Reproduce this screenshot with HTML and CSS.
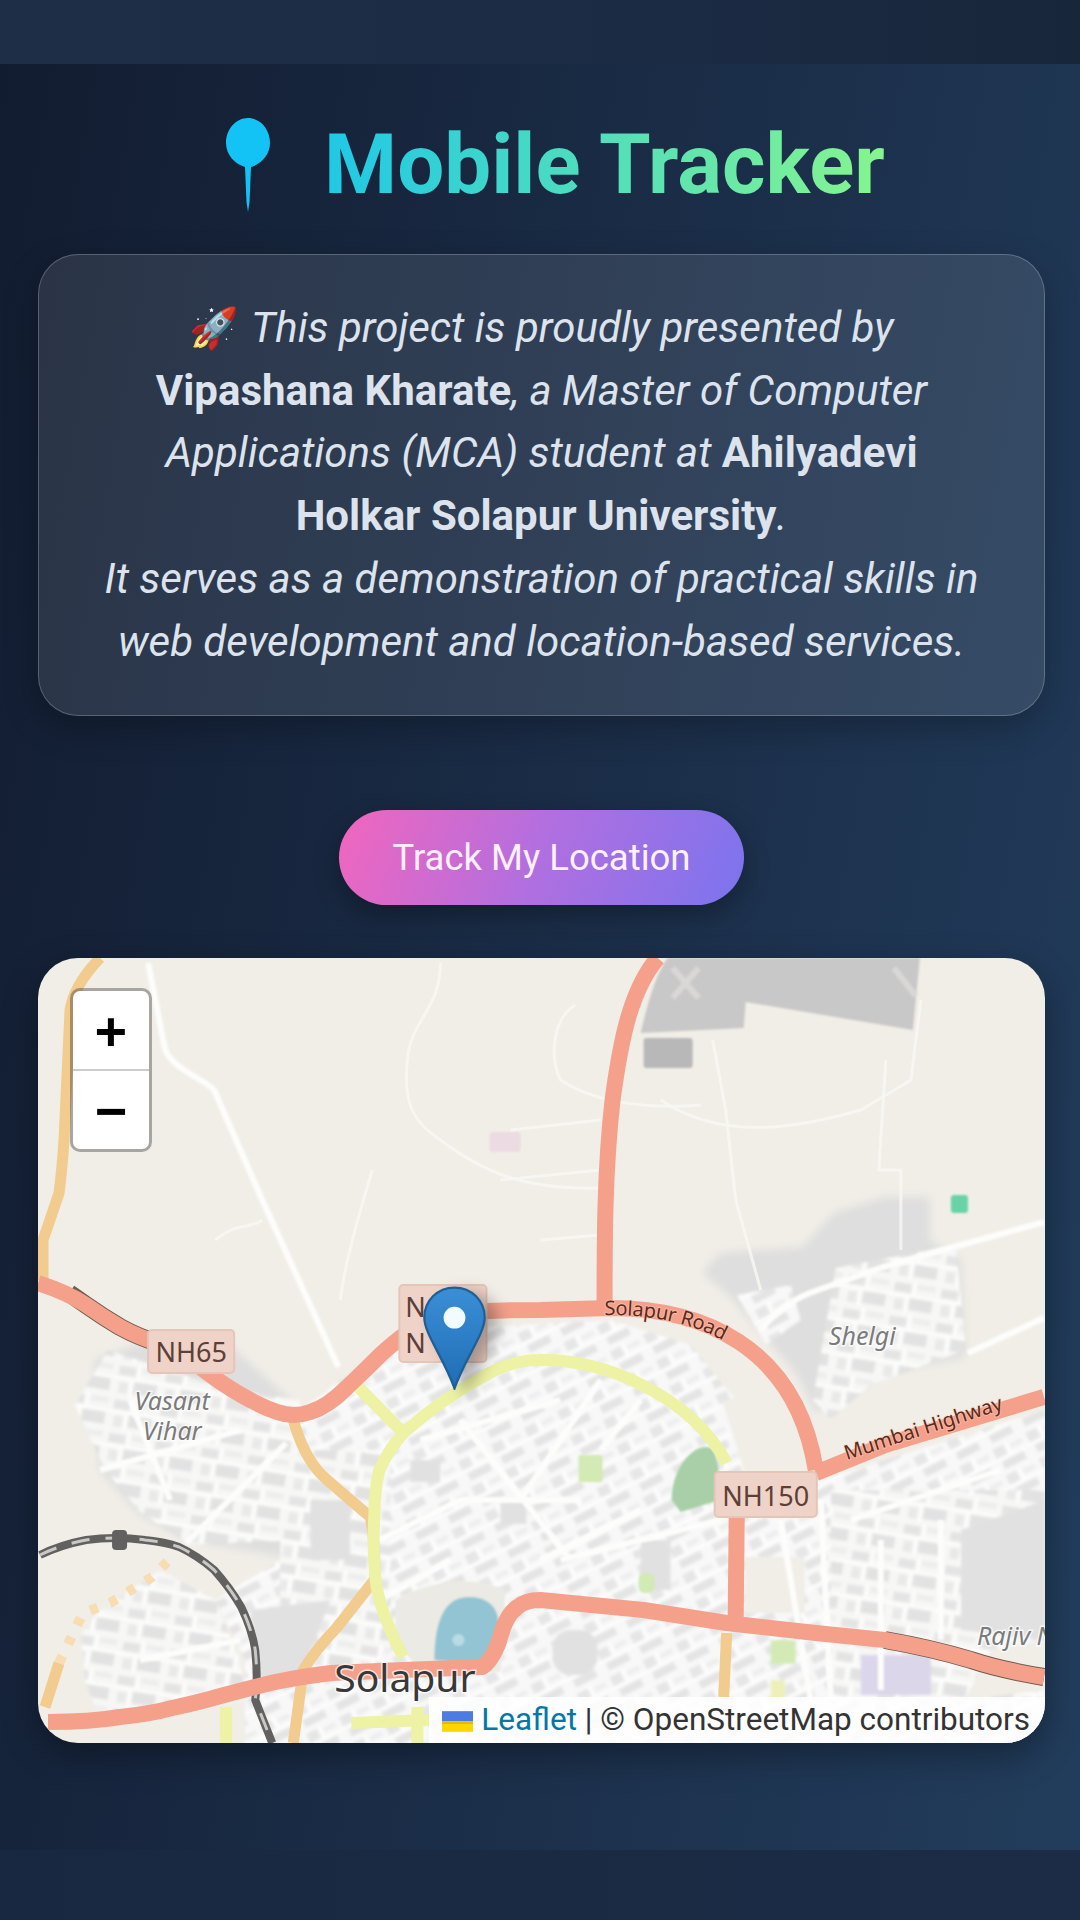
FILE: index.html
```html
<!DOCTYPE html>
<html lang="en">
<head>
<meta charset="utf-8">
<title>Mobile Tracker</title>
<link rel="stylesheet" href="styles.css">
</head>
<body>
<div class="bar-top"></div>
<main class="page">
  <header class="title-row">
    <svg class="title-pin" viewBox="0 0 44 94" aria-hidden="true">
      <path d="M22 0C34 0 44 11 44 25C44 37 35 46 25 49L23.500 84L22 94L20.500 84L19 49C9 46 0 37 0 25C0 11 10 0 22 0Z"/>
    </svg>
    <h1 class="title">Mobile Tracker</h1>
  </header>
  <section class="intro">
    <p class="intro-text"><span class="rocket">🚀</span> This project is proudly presented by <strong>Vipashana Kharate</strong>, a Master of Computer Applications (MCA) student at <strong>Ahilyadevi Holkar Solapur University</strong>.<br>It serves as a demonstration of practical skills in web development and location-based services.</p>
  </section>
  <button class="track-btn" type="button">Track My Location</button>
  <section class="map">
    <svg class="map-svg" viewBox="38 958 1006 785" preserveAspectRatio="none">
      <defs>
        <pattern id="mesh" width="47" height="34" patternUnits="userSpaceOnUse" patternTransform="rotate(9)">
          <rect width="47" height="34" fill="#f7f7f6"/>
          <rect x="3" y="4" width="17" height="9" fill="#e4e4e4"/>
          <rect x="26" y="3" width="18" height="6" fill="#eeeeee"/>
          <rect x="5" y="20" width="9" height="11" fill="#e9e9e9"/>
          <rect x="20" y="18" width="23" height="12" fill="#e2e2e2"/>
          <path d="M0 16H47M23 0V16M17 16V34" stroke="#fff" stroke-width="2"/>
        </pattern>
        <pattern id="mesh2" width="37" height="29" patternUnits="userSpaceOnUse" patternTransform="rotate(-27)">
          <rect width="37" height="29" fill="#f8f8f8"/>
          <rect x="3" y="2" width="12" height="10" fill="#e6e6e6"/>
          <rect x="21" y="4" width="13" height="5" fill="#eeeeee"/>
          <rect x="6" y="17" width="24" height="8" fill="#e4e4e4"/>
          <path d="M0 14H37M18 0V14" stroke="#fff" stroke-width="2"/>
        </pattern>
        <filter id="soft"><feGaussianBlur stdDeviation="1"/></filter>
        <filter id="blur-mesh"><feGaussianBlur stdDeviation="1.8"/></filter>
        <filter id="softer"><feGaussianBlur stdDeviation="4"/></filter>
      </defs>
      <rect class="land" x="38" y="958" width="1006" height="785"/>

      <g filter="url(#softer)">
        <path class="grey-zone" d="M702 1273L719 1253L802 1247L833 1213L884 1197L929 1197L929 1240L960 1260L964 1357L884 1373L815 1413L795 1373L760 1333L733 1300Z"/>
        <path class="grey-zone" d="M95 1360L150 1340L230 1345L290 1400L300 1560L190 1540L140 1515L100 1470Z"/>
      </g>

      <g filter="url(#soft)">
        <path class="mine" d="M667 958L919 958L912 1030L745 1002L743 1028L640 1033C648 1000 655 975 667 958Z"/>
        <rect class="mine-dark" x="643" y="1038" width="49" height="30" rx="3"/>
        <path class="mine-icon" d="M672 968L698 998M698 968L672 998M893 968L915 996"/>
      </g>
      <g filter="url(#blur-mesh)">
        <path class="city-b" d="M1044 1410L820 1480L760 1470L735 1400L690 1345L610 1320L430 1330L340 1380L300 1410L280 1560L215 1600L245 1660L245 1745L1044 1745Z"/>
        <path class="city-a" d="M75 1405L108 1350L230 1390L300 1400L300 1540L190 1545L140 1512L105 1470Z"/>
        <path class="city-a" d="M80 1625L160 1570L215 1600L240 1660L245 1700L100 1722L85 1680Z"/>
        <path class="city-a" d="M835 1268L955 1245L965 1350L870 1385L830 1420L812 1400Z"/>
        <path class="city-b" d="M736 1295L790 1285L800 1320L765 1345Z"/>
        <rect class="city-a" x="280" y="1450" width="110" height="220"/>
        <rect class="city-a" x="830" y="1490" width="214" height="210"/>
        <rect class="city-b" x="540" y="1480" width="90" height="110"/>

        <rect class="land" x="744" y="1557" width="60" height="56"/>
        <path class="land" d="M722 1402L785 1380L806 1465L745 1476Z"/>
        <path class="land" d="M38 1562L86 1548L150 1548L60 1660L38 1690Z"/>
        <path class="land" d="M964 1700L1044 1690L1044 1640L990 1650Z"/>
        <path class="plain-grey" d="M250 1610L330 1600L300 1680L262 1690Z"/>
        <path class="plain-grey" d="M960 1530L1044 1500L1044 1640L960 1630Z"/>
        <rect class="plain-grey" x="552" y="1630" width="45" height="45" rx="18"/>
        <rect class="plain-grey" x="310" y="1500" width="40" height="60"/>
        <rect class="plain-grey" x="640" y="1540" width="30" height="50"/>
        <rect class="plain-grey" x="410" y="1460" width="30" height="22"/>
        <rect class="plain-grey" x="500" y="1500" width="26" height="24"/>
        <rect class="purple" x="860" y="1655" width="70" height="40"/>
        <rect class="lawn" x="770" y="1640" width="25" height="24"/>
        <rect class="pale-yellow" x="770" y="1680" width="14" height="20"/>
      </g>
      <g filter="url(#soft)">
        <rect class="pink" x="489" y="1132" width="31" height="20" rx="3"/>
        <rect class="teal" x="950" y="1195" width="17" height="18" rx="3"/>
        <path class="park" d="M671 1500C671 1470 690 1447 705 1447C716 1447 719 1465 719 1500L680 1512Z"/>
        <rect class="lawn" x="578" y="1455" width="24" height="27" rx="2"/>
        <rect class="lawn" x="638" y="1573" width="16" height="20" rx="6"/>
        <path class="halo" d="M395 1600C430 1580 470 1575 505 1590L500 1672L420 1672L395 1640Z"/>
        <path class="lake" d="M434 1660C434 1630 440 1597 468 1597C490 1597 500 1610 498 1630C496 1650 485 1664 470 1664Z"/>
        <circle class="lake-spot" cx="458" cy="1640" r="6"/>
      </g>

      <g class="faint">
        <path d="M440 963C440 1010 410 1020 407 1060C403 1100 410 1120 440 1140C480 1170 520 1190 600 1188"/>
        <path d="M372 1170C360 1210 345 1260 340 1300"/>
        <path d="M575 1005C550 1020 550 1060 560 1080C590 1100 640 1110 700 1105"/>
        <path d="M712 1040L725 1110L735 1200L760 1290"/>
        <path d="M885 1060L878 1170L900 1170L900 1250"/>
        <path d="M660 1100C720 1140 790 1130 860 1110L910 1080L920 1000"/>
        <path d="M540 1240L600 1235M510 1130L600 1120M500 1180L600 1170"/>
        <path d="M215 1240C240 1220 250 1230 262 1220"/>
      </g>
      <g class="roads-white" filter="url(#soft)">
        <path d="M148 963L165 1050Q170 1062 190 1074Q208 1084 214 1090L262 1200L303 1290L338 1367"/>
        <path d="M286 1443L186 1543"/>
        <path d="M879 1268L953 1247L1043 1222"/>
        <path d="M760 1330Q780 1305 809 1293L879 1268"/>
        <path d="M967 1353L1043 1318"/>
        <path d="M379 1540L460 1500L580 1500M460 1420L570 1560M640 1510L540 1560M780 1520L810 1700M820 1500L830 1700"/>
        <path d="M420 1440L560 1400M600 1380L520 1500M380 1600L450 1560M560 1560L720 1520M640 1400L600 1450"/>
        <path d="M850 1520L1000 1470M880 1540V1690M940 1520V1640M100 1470L240 1430M130 1400L170 1500M140 1660L240 1640"/>
      </g>

      <g class="road-orange">
        <path d="M100 958Q74 985 70 1010L64 1140Q62 1170 59 1193Q50 1220 43 1240L43 1280"/>
        <path d="M293 1420Q305 1462 327 1480Q350 1500 370 1517Q376 1550 374 1580L337 1627Q315 1650 303 1670L293 1743"/>
        <path d="M59 1663L45 1707"/>
        <path d="M726 1633L723 1697"/>
      </g>
      <path class="road-dotted" d="M59 1663L83 1613L110 1603L152 1577L172 1557"/>
      <g class="road-yellow">
        <path d="M403 1657Q378 1610 375 1577Q372 1545 374 1517Q374 1490 379 1470Q388 1450 403 1433Q440 1400 482 1377Q510 1360 540 1360C600 1358 690 1395 726 1463"/>
        <path d="M358 1387L403 1433"/>
        <path d="M351 1723L430 1720M417 1707V1743M226 1707V1743"/>
      </g>
      <path class="rail" d="M40 1555Q60 1545 86 1540Q115 1536 145 1540Q165 1542 179 1547Q198 1556 214 1570Q230 1588 241 1607Q252 1630 255 1650Q258 1680 255 1700L272 1743"/>
      <path class="rail-dash" d="M40 1555Q60 1545 86 1540Q115 1536 145 1540Q165 1542 179 1547Q198 1556 214 1570Q230 1588 241 1607Q252 1630 255 1650Q258 1680 255 1700L272 1743"/>
      <rect class="rail-stop" x="112" y="1530" width="15" height="20" rx="4"/>

      <path class="road-casing" d="M884 1640Q930 1648 970 1660Q1000 1670 1043 1677"/>
      <path class="road-casing" d="M69 1293Q86 1305 86 1305Q103 1317 120 1327Q138 1337 158 1343"/>
      <g class="road-main">
        <path id="ring" d="M38 1283Q69 1293 86 1305Q103 1317 120 1327Q138 1337 158 1343Q179 1350 200 1367Q220 1383 241 1395Q262 1407 277 1412Q293 1418 310 1412Q327 1407 346 1388Q365 1370 382 1353Q400 1337 415 1327Q430 1317 460 1313Q489 1310 540 1310L609 1308C700 1308 795 1345 815 1470"/>
        <path d="M815 1473L884 1445L1043 1397"/>
        <path d="M657 958C630 990 620 1040 612 1100C604 1170 604 1240 604 1305"/>
        <path d="M48 1722Q90 1722 120 1717Q150 1714 172 1708Q200 1702 224 1695Q250 1688 275 1682Q305 1676 331 1673L403 1670L482 1667Q492 1660 499 1640Q505 1615 517 1607Q525 1600 540 1600L643 1610L726 1623L815 1633L884 1640Q930 1648 970 1660Q1000 1670 1043 1677"/>
        <path d="M736 1517L735 1617"/>
      </g>

      <g class="shield">
        <rect x="148" y="1330" width="86" height="43" rx="4"/>
        <rect x="399" y="1285" width="87" height="77" rx="4"/>
        <rect x="714" y="1472" width="102" height="45" rx="4"/>
      </g>
      <text class="shield-text" x="191" y="1362" text-anchor="middle">NH65</text>
      <text class="shield-text" x="405" y="1317">N</text>
      <text class="shield-text" x="405" y="1353">N</text>
      <text class="shield-text" x="765" y="1506" text-anchor="middle">NH150</text>
      <text class="road-label" dy="7"><textPath href="#ring" startOffset="634">Solapur Road</textPath></text>
      <text class="road-label" transform="translate(846 1460) rotate(-18)">Mumbai Highway</text>
      <text class="place-italic" x="172" y="1410" text-anchor="middle">Vasant</text>
      <text class="place-italic" x="172" y="1440" text-anchor="middle">Vihar</text>
      <text class="place-italic" x="828" y="1345">Shelgi</text>
      <text class="place-italic" x="976" y="1645">Rajiv Nagar</text>
      <text class="place-city" x="334" y="1692">Solapur</text>
    </svg>

    <div class="zoom">
      <span class="zoom-btn">+</span>
      <span class="zoom-btn">−</span>
    </div>

    <svg class="marker" viewBox="0 0 25 41" aria-hidden="true">
      <defs>
        <linearGradient id="pin" x1="0" y1="0" x2="0" y2="1">
          <stop offset="0" stop-color="#3a8fd6"/>
          <stop offset="1" stop-color="#1f6db5"/>
        </linearGradient>
      </defs>
      <path d="M12.5 .6C5.700 .6 .6 5.900 .6 12.400C.6 19 8.400 28.500 12.500 40.400C16.600 28.500 24.400 19 24.400 12.400C24.400 5.900 19.300 .6 12.500 .6Z" fill="url(#pin)" stroke="#1f5f95" stroke-width=".9"/>
      <circle cx="12.5" cy="12.5" r="4.3" fill="#f2fbff"/>
    </svg>

    <div class="attribution"><svg class="flag" viewBox="0 0 12 8" aria-hidden="true"><rect width="12" height="4" fill="#4c7be1"/><rect y="4" width="12" height="4" fill="#ffd500"/><rect y="4" width="12" height="1" fill="#e0bc00"/></svg> <a class="attr-link">Leaflet</a> | © OpenStreetMap contributors</div>
  </section>
</main>
<div class="bar-bottom"></div>
</body>
</html>
```
FILE: styles.css
```css
* { box-sizing: border-box; }
html, body { margin: 0; padding: 0; }
body {
  width: 1080px;
  height: 1920px;
  overflow: hidden;
  display: flex;
  flex-direction: column;
  font-family: Roboto, "Noto Sans", sans-serif;
  background: #1b2a42;
}
.bar-top {
  height: 64px;
  flex: none;
  background: linear-gradient(90deg, #1f2e47, #1b2b44 60%, #18263a);
}
.bar-bottom {
  height: 70px;
  flex: none;
  background: linear-gradient(90deg, #182840, #1d2c46);
}
.page {
  flex: 1;
  min-height: 0;
  padding: 54px 35px 0 38px;
  display: flex;
  flex-direction: column;
  align-items: center;
  background: linear-gradient(100deg, #121c30 0%, #1b2e49 55%, #223d5c 100%);
}
.title-row {
  display: flex;
  align-items: center;
  justify-content: center;
  gap: 54px;
  height: 94px;
  width: 100%;
  padding-left: 28px;
}
.title-pin { width: 44px; height: 94px; flex: none; fill: #14c3f5; }
.title {
  margin: 0;
  font-size: 83.5px;
  font-weight: 700;
  line-height: 94px;
  background: linear-gradient(90deg, #1fc8e6, #86f58e);
  -webkit-background-clip: text;
  background-clip: text;
  color: transparent;
}
.intro {
  margin-top: 42px;
  width: 1007px;
  height: 462px;
  padding: 42px 61px 0;
  background: rgba(255, 255, 255, 0.1);
  border: 1.5px solid rgba(255, 255, 255, 0.22);
  border-radius: 40px;
  box-shadow: 0 12px 34px rgba(0, 0, 0, 0.25);
}
.intro-text {
  margin: 0;
  color: #dde3ec;
  font-size: 42px;
  line-height: 62.7px;
  font-style: italic;
  text-align: center;
}
.intro-text strong { font-style: normal; font-weight: 700; }
.rocket { font-size: 40px; line-height: 0; font-style: normal; margin-right: 2px; }
.track-btn {
  margin-top: 94px;
  width: 405px;
  height: 95px;
  border: 0;
  border-radius: 48px;
  font-family: inherit;
  font-size: 36.5px;
  color: #fff0fb;
  background: linear-gradient(112deg, #f266bd 0%, #b06fe0 50%, #7b74ee 100%);
  box-shadow: 0 10px 26px rgba(0, 0, 0, 0.3);
}
.map {
  position: relative;
  margin-top: 53px;
  width: 1007px;
  height: 785px;
  flex: none;
  overflow: hidden;
  border-radius: 40px;
  box-shadow: 0 12px 34px rgba(0, 0, 0, 0.35);
}
.map-svg { display: block; width: 100%; height: 100%; }

.land { fill: #f1eee7; }
.grey-zone { fill: #dedede; }
.mine { fill: #c9c8c8; }
.mine-dark { fill: #b9b8b9; }
.mine-icon { stroke: #d9d8d6; stroke-width: 6; fill: none; }
.city-a { fill: url(#mesh); }
.city-b { fill: url(#mesh2); }
.plain-grey { fill: #e1e1e1; }
.purple { fill: #dcd6ea; }
.pink { fill: #ecdbe2; }
.teal { fill: #6ad2a8; }
.park { fill: #a8cfa8; }
.lawn { fill: #d3eab4; }
.pale-yellow { fill: #eef0b8; }
.halo { fill: #ebeae4; }
.lake { fill: #93c4d4; }
.lake-spot { fill: #b9dbe4; }
.faint path { fill: none; stroke: #f8f7f3; stroke-width: 3; opacity: 0.85; }
.roads-white path { fill: none; stroke: #fdfdfc; stroke-width: 6; stroke-linejoin: round; }
.road-orange path { fill: none; stroke: #f2cb8e; stroke-width: 11; stroke-linejoin: round; }
.road-dotted { fill: none; stroke: #f8dcb2; stroke-width: 10; stroke-dasharray: 8 13; }
.road-yellow path { fill: none; stroke: #edf2a5; stroke-width: 12; stroke-linejoin: round; }
.rail { fill: none; stroke: #62615f; stroke-width: 8; stroke-linejoin: round; }
.rail-dash { fill: none; stroke: #c8c8c8; stroke-width: 3; stroke-dasharray: 18 16; }
.rail-stop { fill: #62615f; }
.road-casing { fill: none; stroke: #6f5b50; stroke-width: 18; }
.road-main path { fill: none; stroke: #f4a08b; stroke-width: 16; stroke-linejoin: round; }
.shield rect { fill: #f0d3c8; stroke: #e5c5b8; stroke-width: 2; }
.shield-text { font-family: "Noto Sans", sans-serif; font-size: 27px; fill: #5c4038; }
.road-label {
  font-family: "Noto Sans", sans-serif;
  font-size: 20px;
  fill: #5a2a20;
  paint-order: stroke;
  stroke: rgba(255, 210, 190, 0.5);
  stroke-width: 2px;
}
.place-italic {
  font-family: "Noto Sans", sans-serif;
  font-style: italic;
  font-size: 25px;
  fill: #7b7b7b;
  paint-order: stroke;
  stroke: rgba(255, 255, 255, 0.7);
  stroke-width: 3px;
}
.place-city {
  font-family: "Noto Sans", sans-serif;
  font-size: 39px;
  fill: #383838;
  paint-order: stroke;
  stroke: rgba(255, 255, 255, 0.7);
  stroke-width: 3px;
}

.zoom {
  position: absolute;
  left: 32px;
  top: 30px;
  width: 82px;
  height: 164px;
  display: flex;
  flex-direction: column;
  background: #fff;
  background-clip: padding-box;
  border: 3px solid rgba(0, 0, 0, 0.3);
  border-radius: 10px;
}
.zoom-btn {
  flex: 1;
  display: flex;
  align-items: center;
  justify-content: center;
  font-family: "DejaVu Sans Mono", "Liberation Mono", monospace;
  font-weight: 700;
  font-size: 52px;
  line-height: 1;
  color: #000;
}
.zoom-btn + .zoom-btn { border-top: 2px solid #ccc; }
.marker {
  position: absolute;
  left: 384px;
  top: 328px;
  width: 65px;
  height: 104px;
  filter: drop-shadow(12px 6px 8px rgba(0, 0, 0, 0.3));
}
.attribution {
  position: absolute;
  right: 0;
  bottom: 0;
  height: 46px;
  padding: 0 15px 0 13px;
  line-height: 46px;
  white-space: nowrap;
  font-size: 31.5px;
  color: #333;
  background: rgba(255, 255, 255, 0.85);
}
.flag { width: 31px; height: 21px; vertical-align: -2px; }
.attr-link { color: #0078a8; }
```
